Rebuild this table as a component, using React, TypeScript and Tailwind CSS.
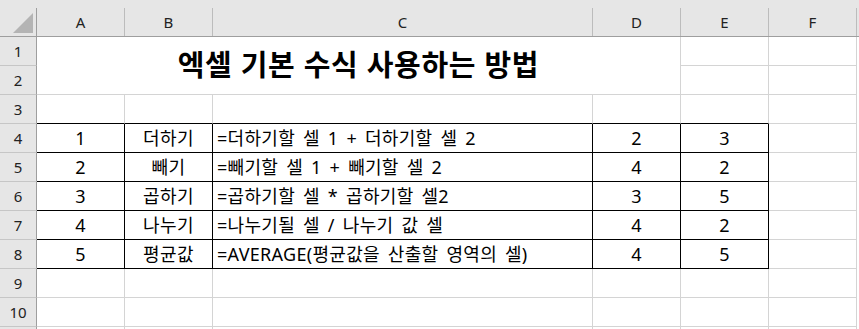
import React from "react";

const cols = ["A", "B", "C", "D", "E", "F"];

const rows = [
  { n: "1", label: "더하기", formula: "=더하기할 셀 1 + 더하기할 셀 2", d: "2", e: "3" },
  { n: "2", label: "빼기", formula: "=빼기할 셀 1 + 빼기할 셀 2", d: "4", e: "2" },
  { n: "3", label: "곱하기", formula: "=곱하기할 셀 * 곱하기할 셀2", d: "3", e: "5" },
  { n: "4", label: "나누기", formula: "=나누기될 셀 / 나누기 값 셀", d: "4", e: "2" },
  { n: "5", label: "평균값", formula: "=AVERAGE(평균값을 산출할 영역의 셀)", d: "4", e: "5" },
];

const grid = "border-r border-b border-[#d4d4d4] bg-white";
const black = "border-r border-b border-black bg-white";
const font = { fontFamily: '"Noto Sans", "Noto Sans CJK KR", sans-serif' };

function RowHead({ n }: { n: string }) {
  return (
    <div className="flex items-center justify-center border-r border-b border-r-[#9e9e9e] border-b-[#c6c6c6] bg-[#e6e6e6] text-[15px] text-[#222]">
      {n}
    </div>
  );
}

export default function App() {
  return (
    <div className="h-[329px] w-[859px] overflow-hidden bg-white" style={font}>
      <div className="grid grid-cols-[37px_88px_88px_380px_88px_88px_88px_1fr] grid-rows-[37px_repeat(11,29px)]">
        {/* corner */}
        <div className="relative border-b border-[#9e9e9e] bg-[#e6e6e6]">
          <div className="absolute right-0 top-[8px] bottom-0 w-px bg-[#9e9e9e]" />
          <svg className="absolute left-0 top-0" width="36" height="36">
            <polygon points="33,13 33,33 13,33" fill="#b4b4b4" />
          </svg>
        </div>
        {cols.map((c) => (
          <div key={c} className="flex flex-col border-b border-[#9e9e9e] bg-[#e6e6e6]">
            <div className="h-[8px]" />
            <div className="flex flex-1 items-center justify-center border-r border-[#bcbcbc] text-[15px] text-[#222]">
              {c}
            </div>
          </div>
        ))}
        <div className="border-b border-[#9e9e9e] bg-[#e6e6e6]" />

        {/* rows 1-2 with merged title */}
        <RowHead n="1" />
        <div
          className={`col-start-2 col-span-4 row-start-2 row-span-2 flex items-center justify-center pb-[1px] text-[29px] font-bold tracking-[0.7px] text-black ${grid}`}
        >
          엑셀 기본 수식 사용하는 방법
        </div>
        <div className={grid} />
        <div className={grid} />
        <div className="bg-white" />
        <RowHead n="2" />
        <div className={grid} />
        <div className={grid} />
        <div className="bg-white" />

        {/* row 3 */}
        <RowHead n="3" />
        <div className="border-r border-b border-r-[#d4d4d4] border-b-black bg-white" />
        <div className="border-r border-b border-r-[#d4d4d4] border-b-black bg-white" />
        <div className="border-r border-b border-r-[#d4d4d4] border-b-black bg-white" />
        <div className="border-r border-b border-r-[#d4d4d4] border-b-black bg-white" />
        <div className="border-r border-b border-r-[#d4d4d4] border-b-black bg-white" />
        <div className={grid} />
        <div className="bg-white" />

        {/* rows 4-8 */}
        {rows.map((r, i) => (
          <React.Fragment key={i}>
            <RowHead n={String(i + 4)} />
            <div className={`flex items-center justify-center text-[18px] text-black ${black}`}>{r.n}</div>
            <div className={`flex items-center justify-center text-[18px] tracking-[0.5px] text-black ${black}`}>{r.label}</div>
            <div
              className={`flex items-center whitespace-nowrap pl-[4px] text-[18px] tracking-[0.3px] [word-spacing:3px] text-black ${black}`}
            >
              {r.formula}
            </div>
            <div className={`flex items-center justify-center text-[18px] text-black ${black}`}>{r.d}</div>
            <div className={`flex items-center justify-center text-[18px] text-black ${black}`}>{r.e}</div>
            <div className={grid} />
            <div className="bg-white" />
          </React.Fragment>
        ))}

        {/* rows 9-11 */}
        {["9", "10", ""].map((n) => (
          <React.Fragment key={n}>
            <RowHead n={n} />
            {cols.map((c) => (
              <div key={c} className={grid} />
            ))}
            <div className="bg-white" />
          </React.Fragment>
        ))}
      </div>
    </div>
  );
}
